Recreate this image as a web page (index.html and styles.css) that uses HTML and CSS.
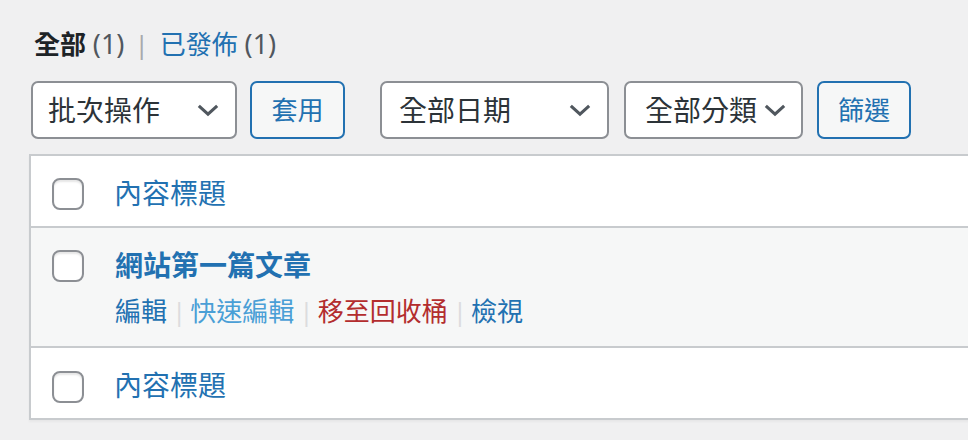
FILE: index.html
```html
<!DOCTYPE html>
<html lang="zh-Hant">
<head>
<meta charset="utf-8">
<title>文章</title>
<link rel="stylesheet" href="styles.css">
</head>
<body>
<div class="wrap">
  <ul class="subsubsub">
    <li><span class="current">全部</span> <span class="count">(1)</span></li>
    <li class="sep">|</li>
    <li><a class="link" href="#">已發佈</a> <span class="count">(1)</span></li>
  </ul>

  <div class="tablenav">
    <div class="select sel-bulk"><span>批次操作</span><svg class="chev" viewBox="0 0 24 14" width="22" height="13"><path d="M2 2 L12 11 L22 2" fill="none" stroke="#50575e" stroke-width="3.4"/></svg></div>
    <button class="btn btn-apply">套用</button>
    <div class="select sel-date"><span>全部日期</span><svg class="chev" viewBox="0 0 24 14" width="22" height="13"><path d="M2 2 L12 11 L22 2" fill="none" stroke="#50575e" stroke-width="3.4"/></svg></div>
    <div class="select sel-cat"><span>全部分類</span><svg class="chev" viewBox="0 0 24 14" width="22" height="13"><path d="M2 2 L12 11 L22 2" fill="none" stroke="#50575e" stroke-width="3.4"/></svg></div>
    <button class="btn btn-filter">篩選</button>
  </div>

  <div class="table">
    <div class="row head">
      <span class="cb"></span>
      <a class="col-title" href="#">內容標題</a>
    </div>
    <div class="row post">
      <span class="cb"></span>
      <div class="post-main">
        <a class="row-title" href="#">網站第一篇文章</a>
        <div class="row-actions">
          <a class="act" href="#">編輯</a><span class="bar">|</span><a class="act quick" href="#">快速編輯</a><span class="bar">|</span><a class="act trash" href="#">移至回收桶</a><span class="bar">|</span><a class="act" href="#">檢視</a>
        </div>
      </div>
    </div>
    <div class="row foot">
      <span class="cb"></span>
      <a class="col-title" href="#">內容標題</a>
    </div>
  </div>
</div>
</body>
</html>
```

FILE: styles.css
```css
html, body {
  margin: 0;
  padding: 0;
  background: #f0f0f1;
  overflow: hidden;
  width: 968px;
  height: 440px;
}
body {
  font-family: "Noto Sans", "Noto Sans CJK TC", sans-serif;
  color: #3c434a;
}
a { text-decoration: none; }

.wrap {
  padding: 26px 0 0 29px;
}

.subsubsub {
  list-style: none;
  margin: 0;
  padding: 0 0 0 5px;
  display: flex;
  align-items: center;
  font-size: 26px;
  line-height: 36px;
  height: 36px;
}
.subsubsub li { white-space: pre; }
.current { color: #1d2327; font-weight: 700; }
.count { color: #50575e; font-size: 27px; }
.link { color: #2271b1; }
.sep { color: #a7aaad; margin: 0 11px 0 10px; }

.tablenav {
  margin-top: 19px;
  display: flex;
  align-items: center;
  padding-left: 2px;
  height: 58px;
}
.select {
  box-sizing: border-box;
  height: 58px;
  border: 2px solid #8c8f94;
  border-radius: 7px;
  background: #fff;
  display: flex;
  align-items: center;
  justify-content: space-between;
  padding: 0 16px 0 15px;
  font-size: 28px;
  color: #2c3338;
  line-height: 1;
}
.chev { display: block; flex: none; }
.sel-bulk { width: 206px; }
.sel-date { width: 229px; margin-left: 35px; padding-left: 17px; }
.sel-cat { width: 179px; margin-left: 15px; padding-left: 19px; padding-right: 15px; }

.btn {
  box-sizing: border-box;
  height: 58px;
  border: 2px solid #2271b1;
  border-radius: 7px;
  background: #f6f7f7;
  color: #2271b1;
  font-family: "Noto Sans", "Noto Sans CJK TC", sans-serif;
  font-size: 26px;
  line-height: 1;
  padding: 0;
  text-align: center;
}
.btn-apply { width: 95px; margin-left: 13px; }
.btn-filter { width: 94px; margin-left: 14px; }

.table {
  margin-top: 15px;
  width: 980px;
  background: #fff;
  border: 2px solid #c8cbce;
  box-shadow: 0 2px 2px rgba(0,0,0,.04);
}
.row {
  display: flex;
  align-items: flex-start;
  padding-left: 21px;
  box-sizing: border-box;
}
.head { height: 72px; border-bottom: 2px solid #c8cbce; }
.post { height: 120px; background: #f6f7f7; border-bottom: 2px solid #c8cbce; }
.foot { height: 70px; }

.cb {
  flex: none;
  box-sizing: border-box;
  width: 32px;
  height: 32px;
  border: 2px solid #8c8f94;
  border-radius: 8px;
  background: #fff;
  box-shadow: inset 0 2px 2px rgba(0,0,0,.1);
  margin-top: 22px;
}
.foot .cb { margin-top: 23px; }

.col-title {
  color: #2271b1;
  font-size: 28px;
  line-height: 40px;
  margin: 17px 0 0 30px;
}

.post-main {
  margin: 17px 0 0 31px;
  display: flex;
  flex-direction: column;
}
.row-title {
  color: #2271b1;
  font-weight: 700;
  font-size: 28px;
  line-height: 40px;
}
.row-actions {
  margin-top: 8px;
  font-size: 26px;
  line-height: 36px;
  display: flex;
  align-items: center;
}
.act { color: #2271b1; }
.act.quick { color: #4a9fd6; }
.act.trash { color: #b32d2e; }
.bar { color: #dcdcde; margin: 0 4px 0 5px; }
```
